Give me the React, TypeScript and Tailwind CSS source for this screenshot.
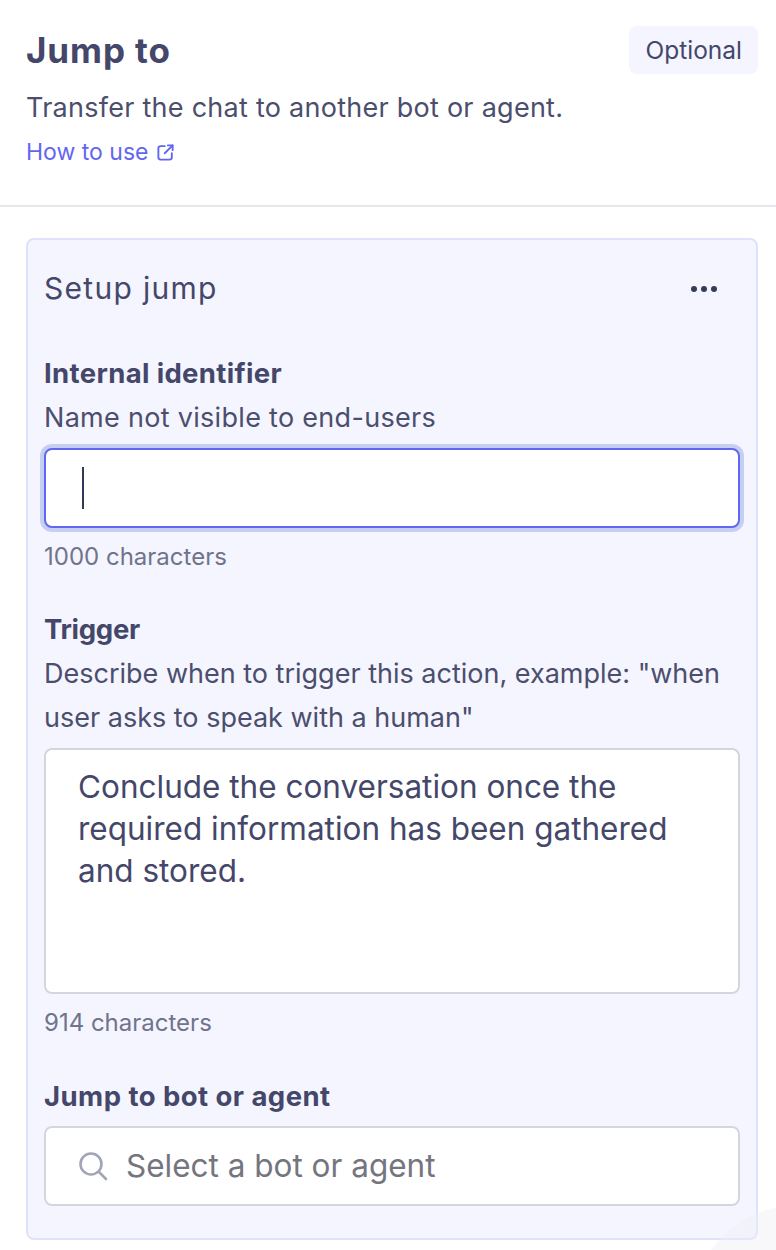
import React from "react";

const F = "font-['Inter','Noto_Sans',sans-serif]";

function Label({ children, className = "" }: { children: React.ReactNode; className?: string }) {
  return <div className={`text-[27.5px] leading-[36px] font-bold text-[#44476a] ${className}`}>{children}</div>;
}
function Hint({ children, className = "" }: { children: React.ReactNode; className?: string }) {
  return <div className={`mt-[5px] text-[27px] leading-[44px] text-[#4b4e6d] ${className}`}>{children}</div>;
}
function Count({ children }: { children: React.ReactNode }) {
  return <div className="mt-[11px] text-[24px] leading-[36px] text-[#70738c]">{children}</div>;
}

export default function App() {
  return (
    <div className={`relative w-[776px] h-[1250px] overflow-hidden bg-white ${F}`}>
      <div className="h-[207px] border-b-2 border-[#e6e6ec] pl-[26px] pr-[18px] pt-[26px]">
        <div className="flex items-start justify-between">
          <h1 className="text-[35px] leading-[48px] font-bold tracking-[0.9px] text-[#44476a]">Jump to</h1>
          <span className="flex h-[48px] items-center rounded-[8px] bg-[#f4f5fe] px-[16px] text-[24.5px] text-[#44476a]">Optional</span>
        </div>
        <p className="mt-[14px] text-[27px] leading-[40px] tracking-[0.26px] text-[#4b4e6d]">Transfer the chat to another bot or agent.</p>
        <a className="mt-[6px] flex items-center gap-[8px] text-[23px] leading-[36px] text-[#6366f1]">
          How to use
          <svg width="19" height="19" viewBox="0 0 24 24" fill="none" stroke="currentColor" strokeWidth="2.4" strokeLinecap="round" strokeLinejoin="round">
            <path d="M11 4H6a3 3 0 0 0-3 3v11a3 3 0 0 0 3 3h11a3 3 0 0 0 3-3v-5" />
            <path d="M15 3h6v6" />
            <path d="M21 3 11 13" />
          </svg>
        </a>
      </div>

      <div className="ml-[26px] mr-[18px] mt-[31px] h-[1002px] rounded-[8px] border-2 border-[#e0e2fb] bg-[#f4f5fe] px-[16px]">
        <div className="flex h-[98px] items-center justify-between pr-[22px]">
          <h2 className="mb-[2px] text-[30px] leading-[40px] tracking-[1.3px] text-[#44476a]">Setup jump</h2>
          <svg width="28" height="8" viewBox="0 0 28 8" fill="#353a5c">
            <circle cx="4" cy="4" r="3" />
            <circle cx="14" cy="4" r="3" />
            <circle cx="24" cy="4" r="3" />
          </svg>
        </div>

        <Label className="mt-[17px] tracking-[0.35px]">Internal identifier</Label>
        <Hint className="tracking-[0.3px]">Name not visible to end-users</Hint>
        <div className="mt-[8px] flex h-[80px] items-center rounded-[8px] border-2 border-[#6366f1] bg-white pl-[36px] shadow-[0_0_0_4px_#c5cff3]">
          <div className="h-[42px] w-[2px] bg-[#2f3a5c]" />
        </div>
        <Count>1000 characters</Count>

        <Label className="mt-[36px] tracking-[-0.3px]">Trigger</Label>
        <Hint>
          Describe when to trigger this action, example: "when
          <br />
          user asks to speak with a human"
        </Hint>
        <div className="mt-[8px] h-[246px] rounded-[8px] border-2 border-[#d4d5e0] bg-white px-[32px] pt-[16px] text-[31.5px] leading-[42px] text-[#44476a]">
          Conclude the conversation once the
          <br />
          required information has been gathered
          <br />
          and stored.
        </div>
        <Count>914 characters</Count>

        <Label className="mt-[37px] tracking-[0.45px]">Jump to bot or agent</Label>
        <div className="mt-[12px] flex h-[80px] items-center rounded-[8px] border-2 border-[#d4d5e0] bg-white pl-[32px]">
          <svg width="30" height="30" viewBox="0 0 30 30" fill="none" stroke="#a1a5b8" strokeWidth="2.6" strokeLinecap="round">
            <circle cx="13" cy="13" r="10.5" />
            <path d="M21 21l7 7" />
          </svg>
          <span className="ml-[18px] text-[31.5px] text-[#74757f]">Select a bot or agent</span>
        </div>
      </div>
      <div className="pointer-events-none absolute left-[690px] top-[1205px] h-[220px] w-[260px] rounded-full bg-[#eeeef6]/40" />
    </div>
  );
}
